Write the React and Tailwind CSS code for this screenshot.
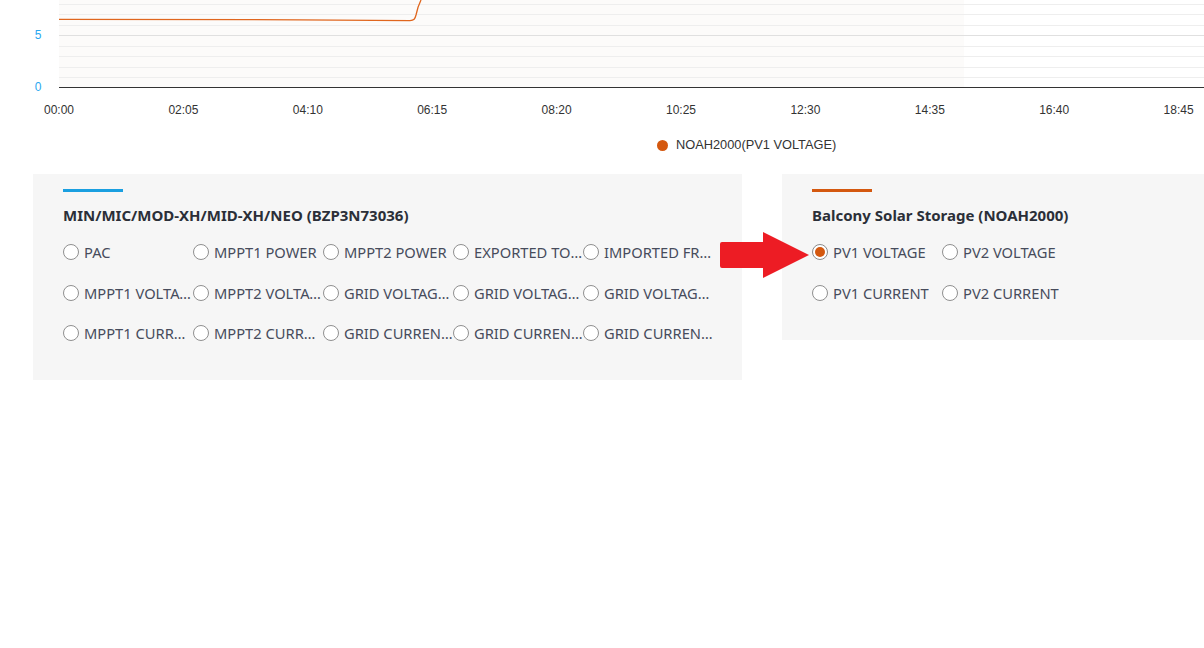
import React from 'react';

const xTicks = ['00:00', '02:05', '04:10', '06:15', '08:20', '10:25', '12:30', '14:35', '16:40', '18:45'];
const gridYs = [4, 14, 25, 46, 56, 67, 77];

const inverterOptions = [
  'PAC', 'MPPT1 POWER', 'MPPT2 POWER', 'EXPORTED TO GRID', 'IMPORTED FROM GRID',
  'MPPT1 VOLTAGE', 'MPPT2 VOLTAGE', 'GRID VOLTAGE R', 'GRID VOLTAGE S', 'GRID VOLTAGE T',
  'MPPT1 CURRENT', 'MPPT2 CURRENT', 'GRID CURRENT R', 'GRID CURRENT S', 'GRID CURRENT T',
];

const noahOptions = ['PV1 VOLTAGE', 'PV2 VOLTAGE', 'PV1 CURRENT', 'PV2 CURRENT'];

function Chart() {
  return (
    <svg width="1204" height="130" className="block" style={{ fontFamily: '"Liberation Sans", Arial, sans-serif' }}>
      <rect x="59" y="0" width="905" height="87" fill="#fcfbfa" />
      {gridYs.map((y) => (
        <line key={y} x1="59" x2="1204" y1={y + 0.5} y2={y + 0.5} stroke="#eeeeee" strokeWidth="1" />
      ))}
      <line x1="59" x2="1204" y1="35.5" y2="35.5" stroke="#e0e0e0" strokeWidth="1" />
      <path
        d="M59 19.3 L300 19.8 L410 20.6 C414 20.6 415 19 416 15 C417 10 419 4 421 0"
        fill="none"
        stroke="#e0661e"
        strokeWidth="1.3"
      />
      <line x1="59" x2="1204" y1="87.5" y2="87.5" stroke="#333333" strokeWidth="1.2" />
      <text x="38" y="39" textAnchor="middle" fontSize="12" fill="#2aa7f0">5</text>
      <text x="38" y="91" textAnchor="middle" fontSize="12" fill="#2aa7f0">0</text>
      {xTicks.map((t, i) => (
        <text key={t} x={59 + i * 124.4} y="114" textAnchor="middle" fontSize="12" fill="#333333">
          {t}
        </text>
      ))}
    </svg>
  );
}

function Radio({ label, checked }) {
  return (
    <label className="flex items-center w-[130px] h-[20px] cursor-pointer">
      <span
        className={`shrink-0 w-4 h-4 rounded-full border flex items-center justify-center bg-white ${
          checked ? 'border-[#8a8a8a]' : 'border-[#8f8f8f]'
        }`}
      >
        {checked && <span className="w-[10px] h-[10px] rounded-full bg-[#d4580f]" />}
      </span>
      <span className="ml-[5px] truncate text-[14.7px] text-[#474c5c] leading-5">{label}</span>
    </label>
  );
}

function Panel({ color, title, options, cols, selected, className }) {
  return (
    <div className={`bg-[#f6f6f6] pl-[30px] pt-[15px] shrink-0 ${className}`}>
      <div className={`w-[60px] h-[3px] ${color}`} />
      <div className="mt-[13px] text-[15px] font-bold text-[#2b2f38] leading-5">{title}</div>
      <div className={`mt-[17px] grid ${cols} gap-y-[20.5px] w-max`}>
        {options.map((o) => (
          <Radio key={o} label={o} checked={o === selected} />
        ))}
      </div>
    </div>
  );
}

export default function App() {
  return (
    <div
      className="relative w-[1204px] h-[648px] overflow-hidden bg-white"
      style={{ fontFamily: '"Noto Sans", "Open Sans", sans-serif' }}
    >
      <Chart />
      <div
        className="flex items-center h-[30px] pl-[657px] text-[12.8px] text-[#333]"
        style={{ fontFamily: '"Liberation Sans", Arial, sans-serif' }}
      >
        <span className="w-[11px] h-[11px] rounded-full bg-[#d4580f]" />
        <span className="ml-[8px]">NOAH2000(PV1 VOLTAGE)</span>
      </div>
      <div className="flex items-start gap-[40px] pl-[33px] mt-[14px]">
        <Panel
          color="bg-[#1a9fe0]"
          title="MIN/MIC/MOD-XH/MID-XH/NEO (BZP3N73036)"
          options={inverterOptions}
          cols="grid-cols-[130px_130px_130px_130px_130px]"
          className="w-[709px] h-[206px]"
        />
        <Panel
          color="bg-[#d4580f]"
          title="Balcony Solar Storage (NOAH2000)"
          options={noahOptions}
          cols="grid-cols-[130px_130px]"
          selected="PV1 VOLTAGE"
          className="w-[709px] h-[166px]"
        />
      </div>
      <svg className="absolute left-[720px] top-[232px]" width="90" height="47" viewBox="0 0 90 47">
        <path d="M2 10 L43 10 L43 0 L89 23 L43 46 L43 36 L2 36 Q0 36 0 34 L0 12 Q0 10 2 10 Z" fill="#ed1c24" />
      </svg>
    </div>
  );
}
